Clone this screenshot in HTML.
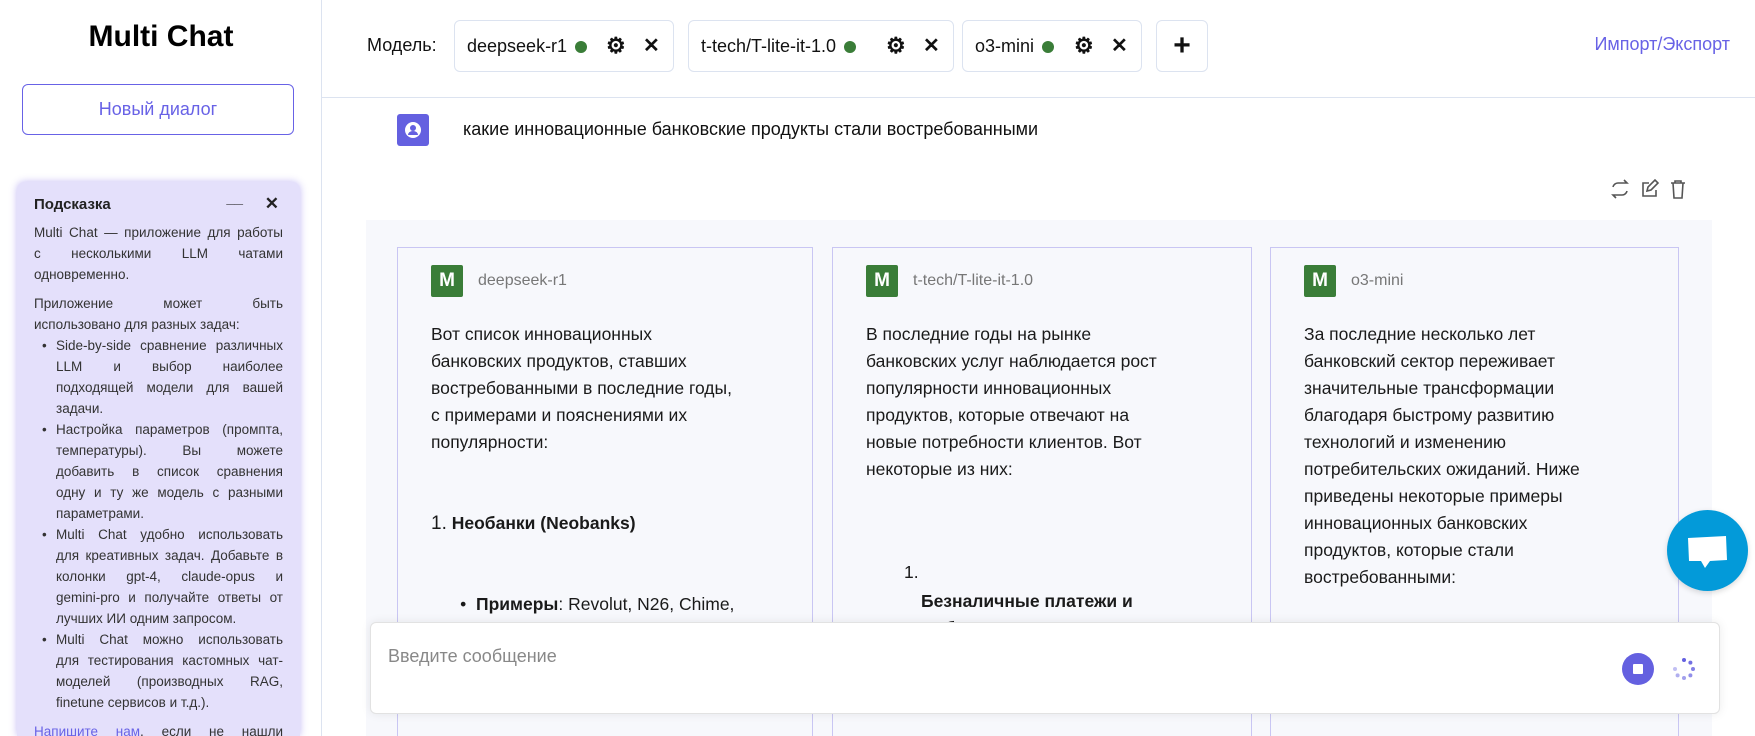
<!DOCTYPE html>
<html><head><meta charset="utf-8"><style>
*{box-sizing:border-box;margin:0;padding:0}
html,body{width:1755px;height:736px;overflow:hidden}
body{background:#fff;font-family:"Liberation Sans",sans-serif;color:#222;position:relative}
.abs{position:absolute}
.side{left:0;top:0;width:322px;height:736px;border-right:1px solid #dce3f0}
.title{left:0;width:322px;top:20px;text-align:center;font-size:30px;font-weight:bold;color:#000}
.newbtn{left:22px;top:84px;width:272px;height:51px;border:1.5px solid #6862e6;border-radius:6px;color:#6862e6;font-size:18px;text-align:center;line-height:48px}
.hint{left:17px;top:182px;width:283px;height:554px;background:#e4e0fb;border-radius:8px 8px 0 0;box-shadow:0 0 8px rgba(120,100,230,.45);padding:12px 17px;font-size:13.5px;line-height:21px;color:#333;overflow:hidden}
.hint .h{font-weight:bold;font-size:15px;color:#222;margin-bottom:8px;height:20px;position:relative}
.j{text-align-last:justify;white-space:nowrap}
.hint p{margin-bottom:8px}
.li{padding-left:22px;position:relative}
.li:before{content:"•";position:absolute;left:8px;top:0}
.top{left:322px;top:0;width:1433px;height:98px;border-bottom:1px solid #dce3f0}
.chip{top:20px;height:52px;border:1px solid #dce3f0;border-radius:6px;font-size:18px;line-height:50px;color:#111;padding-left:12px}
.dot{display:inline-block;width:12px;height:12px;border-radius:50%;background:#3a7d38;vertical-align:middle;margin-left:8px}
.x{position:absolute;font-size:20px;font-weight:bold}
.gray{left:366px;top:220px;width:1346px;height:516px;background:#f7f8fc}
.col{top:247px;height:500px;border:1px solid #c9c6f3;background:#f7f8fc;font-size:17.5px;line-height:27px;color:#1a1a1a;white-space:nowrap}
.m{position:absolute;left:33px;top:17px;width:32px;height:32px;background:#3a7d38;color:#fff;font-weight:bold;font-size:19px;text-align:center;line-height:32px;border-radius:2px}
.mn{position:absolute;left:80px;top:20px;font-size:16px;color:#777;line-height:26px}
.t{position:absolute;left:33px}
.inp{left:370px;top:622px;width:1350px;height:92px;background:#fff;border:1px solid #e2e2e2;border-radius:6px;box-shadow:0 0 10px rgba(0,0,0,.08)}
</style></head><body>
<div class="abs side"></div>
<div class="abs title">Multi Chat</div>
<div class="abs newbtn">Новый диалог</div>
<div class="abs hint">
<div class="h">Подсказка<span style="position:absolute;right:40px;top:-6px;font-weight:bold">__</span><span style="position:absolute;right:4px;top:-1px;font-size:17px">✕</span></div>
<div class="j">Multi Chat — приложение для работы</div>
<div class="j">с несколькими LLM чатами</div>
<p>одновременно.</p>
<div class="j">Приложение может быть</div>
<div>использовано для разных задач:</div>
<div class="li"><div class="j">Side-by-side сравнение различных</div><div class="j">LLM и выбор наиболее</div><div class="j">подходящей модели для вашей</div><div>задачи.</div></div>
<div class="li"><div class="j">Настройка параметров (промпта,</div><div class="j">температуры). Вы можете</div><div class="j">добавить в список сравнения</div><div class="j">одну и ту же модель с разными</div><div>параметрами.</div></div>
<div class="li"><div class="j">Multi Chat удобно использовать</div><div class="j">для креативных задач. Добавьте в</div><div class="j">колонки gpt-4, claude-opus и</div><div class="j">gemini-pro и получайте ответы от</div><div>лучших ИИ одним запросом.</div></div>
<div class="li"><div class="j">Multi Chat можно использовать</div><div class="j">для тестирования кастомных чат-</div><div class="j">моделей (производных RAG,</div><p>finetune сервисов и т.д.).</p></div>
<div class="j"><span style="color:#6862e6">Напишите нам</span>, если не нашли</div>
</div>
<div class="abs top"></div>
<div class="abs" style="left:367px;top:32px;font-size:18px;line-height:26px;color:#111">Модель:</div>
<div class="abs chip" style="left:454px;width:220px">deepseek-r1<span class="dot"></span><span class="x" style="left:151px;font-size:22px">⚙</span><span class="x" style="left:188px">✕</span></div>
<div class="abs chip" style="left:688px;width:266px">t-tech/T-lite-it-1.0<span class="dot"></span><span class="x" style="left:197px;font-size:22px">⚙</span><span class="x" style="left:234px">✕</span></div>
<div class="abs chip" style="left:962px;width:180px">o3-mini<span class="dot"></span><span class="x" style="left:111px;font-size:22px">⚙</span><span class="x" style="left:148px">✕</span></div>
<div class="abs chip" style="left:1156px;width:52px;padding:0;text-align:center;font-size:30px;font-weight:bold">+</div>
<div class="abs" style="right:25px;top:34px;font-size:18px;color:#6862e6">Импорт/Экспорт</div>
<div class="abs" style="left:397px;top:114px;width:32px;height:32px;background:#6460e0;border-radius:3px"><svg width="32" height="32"><circle cx="16" cy="16" r="8" fill="#fff"/><circle cx="16" cy="14" r="3" fill="#6460e0"/><path d="M11 21a5 4 0 0 1 10 0" fill="#6460e0"/></svg></div>
<div class="abs" style="left:463px;top:117px;font-size:18px;line-height:24px;color:#111">какие инновационные банковские продукты стали востребованными</div>
<svg class="abs" style="left:1610px;top:178px" width="80" height="22" fill="none" stroke="#555" stroke-width="1.6"><path d="M3 9a5 5 0 0 1 5-4h9l-3-3M17 13a5 5 0 0 1-5 4H3l3 3"/><path d="M39 5h-6v13h13v-6M37 13l1-4 7-7 3 3-7 7z"/><path d="M61 5h14M65 5V3h6v2M63 5l1 15h8l1-15"/></svg>
<div class="abs gray"></div>
<div class="abs col" style="left:397px;width:416px"><div class="m">M</div><div class="mn">deepseek-r1</div>
<div class="t" style="top:73px">Вот список инновационных<br>банковских продуктов, ставших<br>востребованными в последние годы,<br>с примерами и пояснениями их<br>популярности:</div>
<div class="t" style="top:262px"><span style="font-size:19px">1.</span> <b>Необанки (Neobanks)</b></div>
<div class="t" style="top:343px">&nbsp;&nbsp;&nbsp;&nbsp;&nbsp;&nbsp;•&nbsp; <b>Примеры</b>: Revolut, N26, Chime,</div></div>
<div class="abs col" style="left:832px;width:420px"><div class="m">M</div><div class="mn">t-tech/T-lite-it-1.0</div>
<div class="t" style="top:73px">В последние годы на рынке<br>банковских услуг наблюдается рост<br>популярности инновационных<br>продуктов, которые отвечают на<br>новые потребности клиентов. Вот<br>некоторые из них:</div>
<div class="t" style="top:311px;left:71px">1.</div>
<div class="t" style="top:340px;left:88px"><b>Безналичные платежи и</b><br><b>мобильные кошельки:</b> Банки</div></div>
<div class="abs col" style="left:1270px;width:409px"><div class="m">M</div><div class="mn">o3-mini</div><div class="t" style="top:73px">За последние несколько лет<br>банковский сектор переживает<br>значительные трансформации<br>благодаря быстрому развитию<br>технологий и изменению<br>потребительских ожиданий. Ниже<br>приведены некоторые примеры<br>инновационных банковских<br>продуктов, которые стали<br>востребованными:</div></div>
<div class="abs inp"></div>
<div class="abs" style="left:388px;top:646px;font-size:18px;color:#888">Введите сообщение</div>
<div class="abs" style="left:1622px;top:653px;width:32px;height:32px;border-radius:50%;background:#6460e0"><div style="position:absolute;left:11px;top:11px;width:10px;height:10px;background:#fff;border-radius:1px"></div></div>
<svg class="abs" style="left:1672px;top:657px" width="24" height="24"><g fill="#6460e0"><circle cx="12" cy="3" r="2"/><circle cx="18.4" cy="5.6" r="2" opacity=".9"/><circle cx="21" cy="12" r="2" opacity=".8"/><circle cx="18.4" cy="18.4" r="2" opacity=".7"/><circle cx="12" cy="21" r="2" opacity=".6"/><circle cx="5.6" cy="18.4" r="2" opacity=".5"/><circle cx="3" cy="12" r="2" opacity=".4"/></g></svg>
<div class="abs" style="left:1667px;top:510px;width:81px;height:81px;border-radius:50%;background:#039ad9;box-shadow:0 2px 6px rgba(0,0,0,.15)"><svg width="81" height="81"><path d="M21 28l38-2 1 24-17 1-5 7-4-7-12 0z" fill="#fff"/></svg></div>
</body></html>
